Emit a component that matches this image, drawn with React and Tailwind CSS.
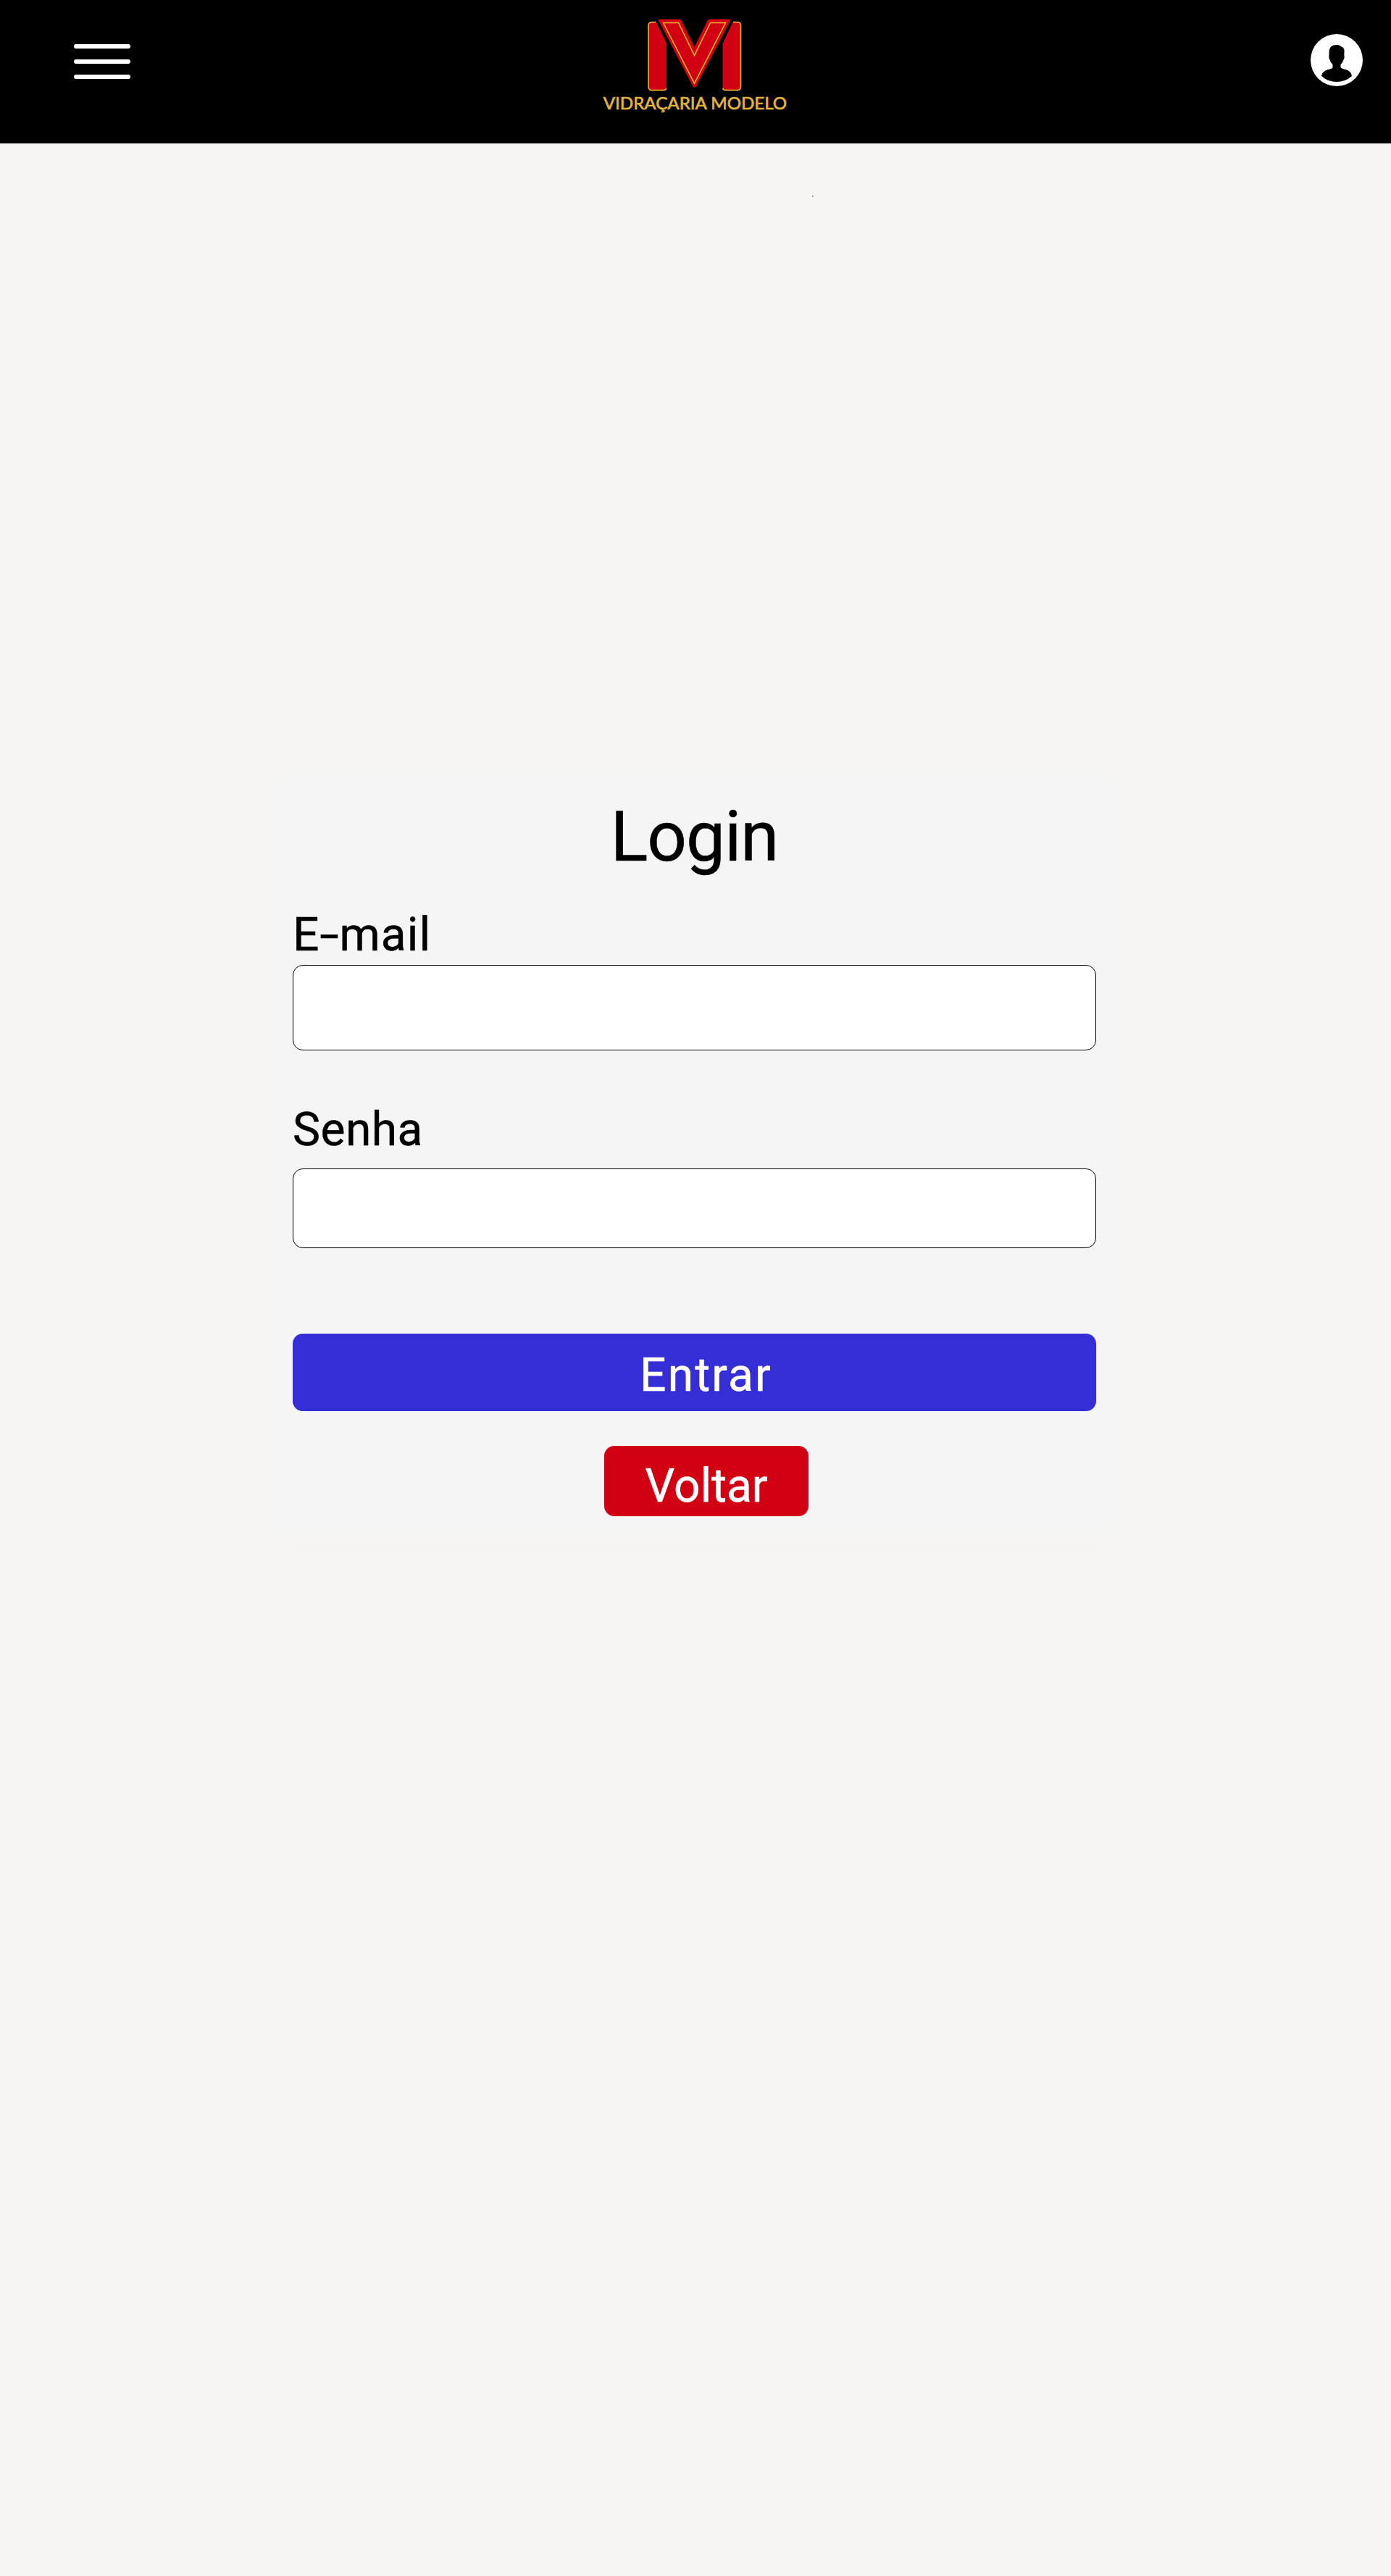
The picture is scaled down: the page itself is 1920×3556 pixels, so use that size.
function Logo() {
  return (
    <svg className="block" width="280" height="198" viewBox="0 0 280 198" role="img" aria-label="Vidraçaria Modelo">
      <g fill="#d20013">
        <path d="M86 30.5H80Q75 30.5 75 35.500V119.500Q75 124.500 80 124.500H96Q100 124.500 100 120.500V60Z" />
        <path d="M191.500 30.500H197.500Q202.500 30.500 202.500 35.500V119.500Q202.500 124.500 197.500 124.500H181.500Q177.500 124.500 177.500 120.500V60Z" />
      </g>
      <path fill="#d20013" stroke="#000" strokeWidth="8" paintOrder="stroke" d="M90 26.500H117.500Q119.500 26.500 120.500 28.500L138.500 65L156.500 28.500Q157.500 26.500 159.500 26.500H187Q189 26.500 188 28.500L141 118.500Q138.500 123.500 136 118.500L89 28.500Q88 26.500 90 26.500Z" />
      <g fill="none" stroke="#edc22f" strokeWidth="1.500">
        <path d="M85.500 30.500H80Q75 30.500 75 35.500V119.500Q75 124.500 80 124.500H96Q99 124.500 100 122" />
        <path d="M192 30.500H197.500Q202.500 30.500 202.500 35.500V119.500Q202.500 124.500 197.500 124.500H181.500Q178.500 124.500 177.500 122" />
        <path d="M95.500 31.500H116.500L138.500 76.500L160.500 31.500H181.500L138.500 115Z" />
      </g>
      <text x="12.700" y="150.800" textLength="253.500" lengthAdjust="spacingAndGlyphs" className="font-['Lato'] text-[23.500px]" fill="#e2b33c" stroke="#e2b33c" strokeWidth="0.700">VIDRAÇARIA MODELO</text>
    </svg>
  );
}

function UserIcon() {
  return (
    <svg className="block" width="72" height="72" viewBox="0 0 72 72" aria-hidden="true">
      <circle cx="36" cy="36" r="36" fill="#fff" />
      <path d="M35 15C40 14.500 41.500 17 44 18Q47 20 46.500 25Q46 29 46.700 31Q46.700 34 45.500 35.500Q44.500 39.500 41.500 42V46Q43 48 49 49Q56 51.500 57 58Q48 66 36 66T15 58Q16 51.500 24 49Q30 48 30.500 46V42Q27.500 39.500 26.500 35.500Q25.300 34 25.300 31Q25.700 29 25.500 25Q25.500 15.500 35 15Z" fill="#000" />
    </svg>
  );
}

export default function App() {
  return (
    <div className="h-[3556px] w-[1920px] overflow-hidden bg-[#f6f5f4] font-['Roboto',sans-serif] text-black">
      <header className="flex h-[198px] items-start bg-black pl-[102px] pr-[39px]">
        <button aria-label="Menu" className="mt-[61px] flex w-[78px] flex-col gap-[15px]">
          <span className="h-1.5 w-full rounded-full bg-white" />
          <span className="h-1.5 w-full rounded-full bg-white" />
          <span className="h-1.5 w-full rounded-full bg-white" />
        </button>
        <div className="ml-[640px]"><Logo /></div>
        <button aria-label="Conta" className="ml-auto mt-[47px]"><UserIcon /></button>
      </header>
      <div className="ml-[1121px] mt-[72px] size-[1.500px] bg-[#a8a8a8]" />
      <main className="ml-[404px] mt-[821.500px] w-[1109px] bg-[#f5f5f5] shadow-[0_0_24px_24px_#f5f5f5] [-webkit-text-stroke:0.500px]">
        <h1 className="h-[160px] text-center text-[96px] leading-[125px] tracking-[-1px]">Login</h1>
        <form>
          <label htmlFor="email" className="block h-[79px] text-[64px] leading-[76px] tracking-[1.200px]">
            E<span className="mx-1 inline-block scale-x-150">-</span>mail
          </label>
          <input id="email" className="block h-[118px] w-full rounded-[14px] border border-black bg-white px-6 text-5xl" />
          <label htmlFor="senha" className="mt-[69px] block h-[94px] text-[64px] leading-[82px] tracking-[0.500px]">Senha</label>
          <input id="senha" type="password" className="block h-[110px] w-full rounded-[14px] border border-black bg-white px-6 text-5xl" />
          <button type="button" className="mt-[118px] block h-[107px] w-full rounded-[14px] bg-[#352dd5] pl-[32px] pt-0.5 text-[64px] leading-[112px] tracking-[2.200px] text-white">Entrar</button>
          <button type="button" className="ml-[430px] mt-[48px] block h-[97px] w-[282px] rounded-[14px] bg-[#d20013] text-[64px] leading-[112px] text-white">Voltar</button>
        </form>
      </main>
    </div>
  );
}
